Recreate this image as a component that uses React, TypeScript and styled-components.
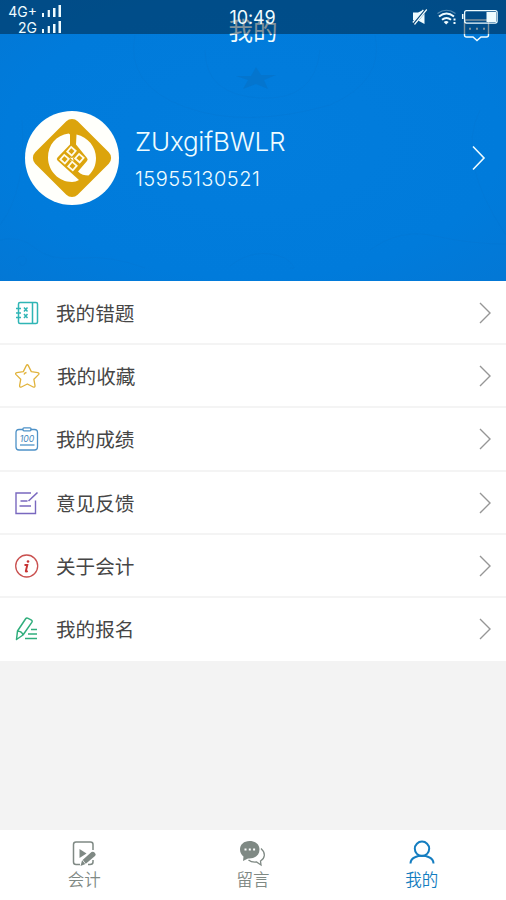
import React from 'react';
import styled, { createGlobalStyle } from 'styled-components';

const GlobalStyle = createGlobalStyle`
  * { box-sizing: border-box; }
  body { margin: 0; background: #f3f3f3; }
`;

const Screen = styled.div`
  width: 506px;
  height: 900px;
  display: flex;
  flex-direction: column;
  background: #f3f3f3;
  font-family: Inter, 'Noto Sans CJK SC', sans-serif;
  overflow: hidden;
  position: relative;
`;

const StatusBar = styled.div`
  position: absolute;
  inset: 0 0 auto 0;
  height: 34px;
  background: rgba(0, 24, 42, 0.46);
  color: #effcff;
  display: grid;
  grid-template-columns: 1fr auto 1fr;
`;

const Signals = styled.div`
  display: flex;
  flex-direction: column;
  padding: 3px 0 0 7px;
`;

const SignalRow = styled.div`
  display: flex;
  align-items: center;
  width: 55px;
  height: 16px;
  justify-content: flex-end;
  gap: 5px;
  font-size: 14px;
  line-height: 16px;
`;

const SignalText = styled.span`
  padding-top: 1px;
`;

const Clock = styled.div`
  font-size: 18px;
  line-height: 20px;
  padding-top: 8px;
  letter-spacing: -0.1px;
  width: 47px;
  white-space: nowrap;
`;

const StatusIcons = styled.div`
  display: flex;
  justify-content: flex-end;
  padding: 8px 8px 0 0;
`;

const Header = styled.header`
  height: 281px;
  flex: none;
  background: #007bdb;
  color: #effcff;
  position: relative;
  display: flex;
  flex-direction: column;
`;

const Backdrop = styled.svg`
  position: absolute;
  inset: 0;
`;

const TitleBar = styled.div`
  position: relative;
  height: 50px;
  display: grid;
  grid-template-columns: 1fr auto 1fr;
`;

const Title = styled.h1`
  grid-column: 2;
  margin: 0;
  padding-top: 15px;
  font-size: 24.5px;
  line-height: 32px;
  font-weight: 400;
`;

const MessageIcon = styled.svg`
  justify-self: end;
  margin: 17px 15px 0 0;
`;

const Profile = styled.div`
  position: relative;
  display: flex;
  align-items: center;
  height: 94px;
  margin-top: 61px;
  padding: 0 20px 0 25px;
`;

const ProfileText = styled.div`
  flex: 1;
  padding: 3px 0 0 16px;
`;

const UserName = styled.div`
  font-size: 26px;
  line-height: 34px;
  font-weight: 300;
  letter-spacing: -0.2px;
`;

const Phone = styled.div`
  margin-top: 4px;
  font-size: 20px;
  line-height: 32px;
  font-weight: 300;
  letter-spacing: 0.5px;
`;

const Menu = styled.nav`
  flex: none;
  height: 380px;
  padding-top: 1px;
  display: grid;
  grid-template-rows: repeat(6, 1fr);
  background: #fff;
`;

const MenuRow = styled.div`
  display: flex;
  align-items: center;
  padding: 1px 14px 0 14px;
  border-bottom: 2px solid #f4f4f4;

  &:last-child {
    border-bottom-color: #fff;
  }
`;

const MenuLabel = styled.span<{ $inset?: number }>`
  flex: 1;
  padding-left: ${(p) => 16 + (p.$inset ?? 0)}px;
  font-size: 19.6px;
  line-height: 28px;
  color: #464646;
  padding-top: 2px;
`;

const TabBar = styled.footer`
  margin-top: auto;
  height: 70px;
  background: #fff;
  display: grid;
  grid-template-columns: repeat(3, 1fr);
`;

const Tab = styled.div<{ $active?: boolean }>`
  display: flex;
  flex-direction: column;
  align-items: center;
  padding-top: 8px;
  color: ${(p) => (p.$active ? '#147dc0' : '#7f8984')};
`;

const TabLabel = styled.span`
  font-size: 16.5px;
  line-height: 24px;
  font-weight: 350;
  padding-top: 1px;
`;

const IconSvg = styled.svg`
  display: block;
  flex: none;
  overflow: visible;
`;

const Bars = () => (
  <IconSvg width="20" height="14" viewBox="0 0 20 14" fill="currentColor">
    <path d="M0 9h2v4H0zM5.700 6h2.200v7H5.700zM11 4h2.500v9H11zM16.500 1H19v12h-2.500z" />
  </IconSvg>
);

const DeviceIcons = () => (
  <IconSvg width="87" height="18" viewBox="411 8 87 18" fill="none" stroke="currentColor">
    <path d="M413 12.500h5l6.500-3V24l-6.500-3.500-5-.5z" fill="currentColor" stroke="none" />
    <path d="M413 24.500 426 9.500" stroke="#06477a" strokeWidth="3.400" />
    <path d="m414.500 24.500 12.300-15M412.800 22.500l10.500-12.500" strokeWidth="1.200" />
    <path d="M437.500 13.500q9-6.500 18 0" strokeWidth="1.200" opacity=".35" />
    <path d="M439 16.500q7.500-6 15 0M442 19.800q4.500-3.500 9 0" strokeWidth="2" />
    <path d="m443.700 22 2.500 2.500 2.500-2.500q-2.500-1.800-5 0z" fill="currentColor" stroke="none" />
    <path d="M453.500 18.500h2v2h-2zM453.500 22h2v2h-2z" fill="currentColor" stroke="none" />
    <path d="M462.700 14v5" strokeWidth="1.500" />
    <rect x="464.600" y="10.600" width="32.500" height="12.500" rx="2" strokeWidth="1.300" />
    <path d="M486.500 12h9.500v10h-9.500z" fill="currentColor" stroke="none" />
  </IconSvg>
);

const Avatar = () => (
  <IconSvg width="94" height="94" viewBox="0 0 94 94">
    <circle cx="47" cy="47" r="47" fill="#fffffb" />
    <rect x="17" y="17" width="60" height="60" rx="8" transform="rotate(45 47 47)" fill="#dca40c" />
    <path d="M43.700 22.500C31 24 23 34 23 46.500 23 60 34 71 47 71c2.500 0 5-.7 7-2L32.500 49.500q-1.500-1.500 0-3L45 33.500V23.500z" fill="#fffffb" />
    <path d="M51.500 23.500C63 26 71 36 71 47c0 7-2.500 13-7.500 17.500-4 0-7.500-1-10.500-4L62 50q1.300-1.500 0-3L51 33.500z" fill="#fffffb" />
    <g fill="none" stroke="#fffbe8" strokeWidth="1.800" transform="translate(47 48) rotate(41)">
      <rect x="-8.500" y="-8.500" width="6" height="6" />
      <rect x="2" y="-8.500" width="6" height="6" />
      <rect x="-8.500" y="2" width="6" height="6" />
      <rect x="2" y="2" width="6" height="6" />
      <path d="M-2 0h4M0-2v4" strokeWidth="1" />
    </g>
  </IconSvg>
);

const Chevron = () => (
  <IconSvg width="14" height="24" viewBox="0 0 14 24" fill="none" stroke="#969696" strokeWidth="1.400">
    <path d="m2 2 10 10L2 22" />
  </IconSvg>
);

const glyphs = {
  book: (
    <g stroke="#2fb5b5" strokeWidth="1.500">
      <rect x="4.500" y="2.500" width="19" height="21" rx="1.500" />
      <path d="M18.500 2.500v21M2 8.500h5M2 13h5M2 17.500h5M10 7.500l3.500 4m0-4-3.500 4M10 14l3.500 4m0-4-3.500 4" />
    </g>
  ),
  star: (
    <g stroke="#e1b33c" strokeLinejoin="round">
      <path d="M12.300 2.600q1-1.700 2 0l3 6 6.500 1q2 .6.700 2l-4.600 4.700 1.100 6.400q0 2-1.800 1.300l-5.900-3-5.900 3q-1.800.7-1.800-1.300l1.100-6.400-4.600-4.700q-1.300-1.400.7-2l6.500-1z" />
      <path d="M10 11.500q.5-1.700 2.500-2" />
    </g>
  ),
  score: (
    <g stroke="#4d91c7">
      <path d="M9 3.500H5q-3 0-3 3V21q0 3 3 3h15.500q3 0 3-3V6.500q0-3-3-3h-4" />
      <rect x="9" y="1.800" width="8" height="3" rx="1" />
      <path d="M6 19h14.500" />
      <text x="12.900" y="15.700" textAnchor="middle" fontFamily="Inter, sans-serif" fontSize="8.700" fontStyle="italic" fill="#3f86bd" stroke="none">100</text>
    </g>
  ),
  feedback: (
    <g stroke="#7968bf" strokeWidth="1.400">
      <path d="M17 3H2v20.500h19.500V10.500M6.500 11h7M5.500 16h11.500" />
      <path d="m14.500 11 9-8.500" strokeWidth="1.600" />
    </g>
  ),
  about: (
    <g stroke="#c9504f">
      <circle cx="12.700" cy="13" r="11" />
      <circle cx="14" cy="8.500" r="1.300" fill="#c73535" stroke="none" />
      <path d="M10.500 12h2.800l-1.500 6.200q0 .8 2 0" strokeWidth="1.900" stroke="#c73535" />
    </g>
  ),
  signup: (
    <g stroke="#30ae7c" strokeWidth="1.500" strokeLinejoin="round">
      <path d="M3.500 15 11.500 3q1-1.500 2.600-.7l3 1.500q1.700 1 .7 2.600L9 19l-6.500 4.500zM3.500 15q4.500.3 5.500 4" />
      <path d="M17 13.500h6M14 18h9M11 22.500h12" />
    </g>
  ),
};

const items: { icon: keyof typeof glyphs; label: string; inset?: number }[] = [
  { icon: 'book', label: '我的错题' },
  { icon: 'star', label: '我的收藏', inset: 1 },
  { icon: 'score', label: '我的成绩' },
  { icon: 'feedback', label: '意见反馈' },
  { icon: 'about', label: '关于会计' },
  { icon: 'signup', label: '我的报名' },
];

export default function App() {
  return (
    <>
      <GlobalStyle />
      <Screen>
        <Header>
          <Backdrop width="506" height="281" viewBox="0 0 506 281" fill="none">
            <defs>
              <radialGradient id="glow" cx=".5" cy=".5" r=".75">
                <stop offset="0" stopColor="#027ddd" />
                <stop offset=".65" stopColor="#007bdb" />
                <stop offset="1" stopColor="#0477d4" />
              </radialGradient>
            </defs>
            <path d="M0 0h506v281H0z" fill="url(#glow)" />
            <path d="m256 67 5 8h15l-12 5 4 9-12-5-13 5 5-9-12-4h15z" fill="#0573ca" fillOpacity=".8" />
            <g stroke="#0874cc" strokeOpacity=".3">
              <path d="M135 35q-10 50 50 72t145-2q55-24 45-70M205 50q0 45 55 48t60-48" />
              <path d="M22 120q5 70-22 105M480 110q-25 50 26 125M16 261c3-8 12-5 10 1s-8 3-6 0" />
              <path d="M0 240q20-5 35 8t45 10 65 10M230 266q25-20 55-8 15 12 5 10M370 250q30-22 65-14t71 8" />
            </g>
          </Backdrop>
          <TitleBar>
            <Title>我的</Title>
            <MessageIcon width="28" height="26" viewBox="0 0 28 26" fill="none" stroke="currentColor" strokeWidth="1.400">
              <path d="M3 3h21q1.500 0 1.500 1.500V18q0 2-2 2H18l-4 3.500-4-3.500H3.500q-2 0-2-2V4.500Q1.500 3 3 3z" />
              <path d="M6 11.700h2m5 0h2m5 0h2" strokeWidth="2" />
            </MessageIcon>
          </TitleBar>
          <Profile>
            <Avatar />
            <ProfileText>
              <UserName>ZUxgifBWLR</UserName>
              <Phone>15955130521</Phone>
            </ProfileText>
            <IconSvg width="14" height="26" viewBox="0 0 14 26" fill="none" stroke="currentColor" strokeWidth="1.600">
              <path d="m1 1.500 11 11.500L1 24.500" />
            </IconSvg>
          </Profile>
        </Header>
        <Menu>
          {items.map((item) => (
            <MenuRow key={item.label}>
              <IconSvg width="26" height="26" viewBox="0 0 26 26" fill="none" strokeWidth="1.300">
                {glyphs[item.icon]}
              </IconSvg>
              <MenuLabel $inset={item.inset}>{item.label}</MenuLabel>
              <Chevron />
            </MenuRow>
          ))}
        </Menu>
        <TabBar>
          <Tab>
            <IconSvg width="28" height="29" viewBox="0 0 28 29" fill="none" stroke="currentColor" strokeWidth="1.500">
              <path d="M10 26.500H6q-2.500 0-2.500-2.500V6.500Q3.500 4 6 4h14.500Q23 4 23 6.500V12M23 22v2q0 2.500-3 2.500h-2" />
              <path d="m9.500 11 7 4.500-7 4.500z" fill="currentColor" stroke="none" />
              <path d="m10.500 28 1.500-5.500L21.500 14q2-1 3.500 1t0 3l-9.500 8z" fill="currentColor" stroke="none" />
              <path d="m12 21.500 4 5" stroke="#fff" strokeWidth=".8" />
            </IconSvg>
            <TabLabel>会计</TabLabel>
          </Tab>
          <Tab>
            <IconSvg width="28" height="29" viewBox="0 0 28 29" fill="none" stroke="currentColor" strokeWidth="1.300">
              <path d="M10.500 3C5 3 1 6.500 1 11.500c0 3 1.500 5.500 3.500 7L4 23 9 20.500c7 .5 11.500-3.500 11.500-9S16 3 10.500 3z" fill="currentColor" stroke="none" />
              <path d="M5.500 11.500h2m2.300 0h2m2.300 0h2" stroke="#fff" strokeWidth="2" />
              <path d="M22 10.500c5 4.500 4 10-.5 12.500l.5 4-4.500-3q-5 .5-8-2" />
            </IconSvg>
            <TabLabel>留言</TabLabel>
          </Tab>
          <Tab $active>
            <IconSvg width="28" height="29" viewBox="0 0 28 29" fill="none" stroke="currentColor" strokeWidth="2">
              <circle cx="14" cy="10.800" r="7.200" />
              <path d="M2.500 25.500q0-4.500 5-6.500 2.500-1.200 6.500-1.200t6.500 1.200q5 2 5 6.500" />
            </IconSvg>
            <TabLabel>我的</TabLabel>
          </Tab>
        </TabBar>
        <StatusBar>
          <Signals>
            <SignalRow><SignalText>4G+</SignalText><Bars /></SignalRow>
            <SignalRow><SignalText>2G</SignalText><Bars /></SignalRow>
          </Signals>
          <Clock>10:49</Clock>
          <StatusIcons><DeviceIcons /></StatusIcons>
        </StatusBar>
      </Screen>
    </>
  );
}
